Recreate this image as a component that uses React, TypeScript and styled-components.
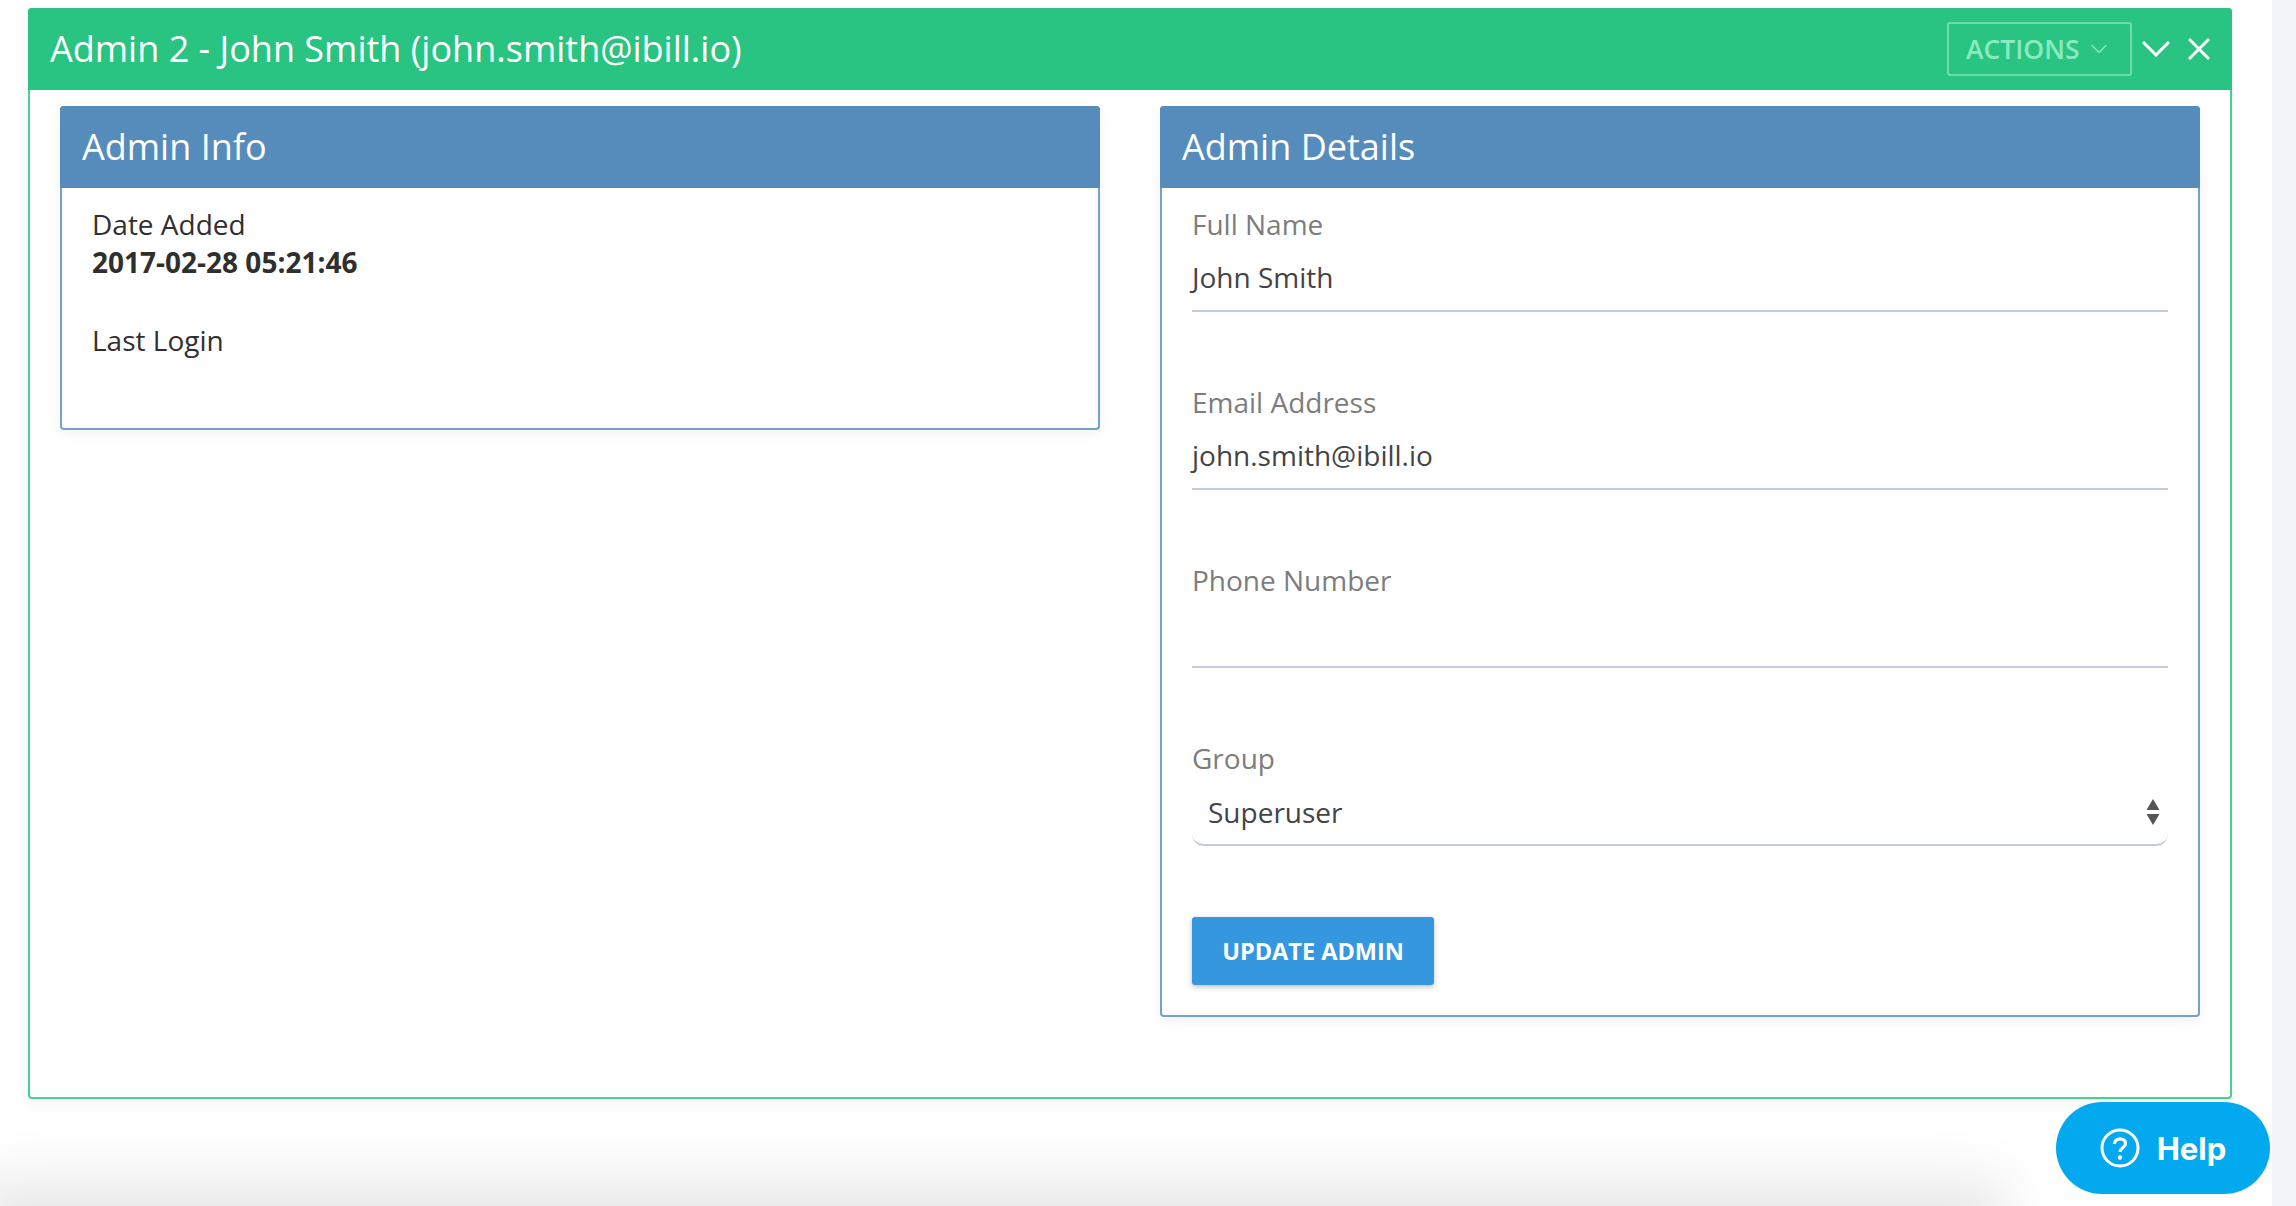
import styled, { createGlobalStyle } from "styled-components"
import { ChevronDown } from "lucide-react"

const GlobalStyle = createGlobalStyle`
    html, body {
        margin: 0;
        height: 100%;
        overflow: hidden;
        background: #fff;
    }
    body {
        font-family: "Open Sans", "Liberation Sans", sans-serif;
        color: #2f2f2f;
    }
`

export default function App() {
    return (
        <Page>
            <GlobalStyle />
            <Main>
                <Panel>
                    <PanelHeader>
                        <PanelTitle>Admin 2 - John Smith (john.smith@ibill.io)</PanelTitle>
                        <PanelTools>
                            <ActionsButton type="button">
                                ACTIONS
                                <ActionsCaret><ChevronDown size={28} strokeWidth={1.2} /></ActionsCaret>
                            </ActionsButton>
                            <svg width="28" height="16" viewBox="0 0 28 16" fill="none">
                                <path d="M1 1 L14 14 L27 1" stroke="#fff" strokeWidth="3" />
                            </svg>
                            <svg width="22" height="22" viewBox="0 0 22 22" fill="none">
                                <path d="M1 1 L21 21 M21 1 L1 21" stroke="#fff" strokeWidth="3" />
                            </svg>
                        </PanelTools>
                    </PanelHeader>
                    <PanelBody>
                        <Card>
                            <CardHeader>Admin Info</CardHeader>
                            <InfoBody>
                                <InfoLabel>Date Added</InfoLabel>
                                <InfoValue>2017-02-28 05:21:46</InfoValue>
                                <InfoLabel>Last Login</InfoLabel>
                            </InfoBody>
                        </Card>
                        <Card>
                            <CardHeader>Admin Details</CardHeader>
                            <FormBody>
                                <Field>
                                    <FieldLabel>Full Name</FieldLabel>
                                    <FieldValue>John Smith</FieldValue>
                                </Field>
                                <Field>
                                    <FieldLabel>Email Address</FieldLabel>
                                    <FieldValue>john.smith@ibill.io</FieldValue>
                                </Field>
                                <Field>
                                    <FieldLabel>Phone Number</FieldLabel>
                                    <FieldValue></FieldValue>
                                </Field>
                                <Field>
                                    <FieldLabel>Group</FieldLabel>
                                    <SelectValue>
                                        Superuser
                                        <svg width="14" height="26" viewBox="0 0 14 26">
                                            <path d="M7 0 L13.5 11 H0.5 Z M0.5 15 H13.5 L7 26 Z" fill="#555" />
                                        </svg>
                                    </SelectValue>
                                </Field>
                                <SubmitButton type="button">UPDATE ADMIN</SubmitButton>
                            </FormBody>
                        </Card>
                    </PanelBody>
                </Panel>
                <BottomFade />
            </Main>
            <Strip />
            <HelpButton type="button">
                <svg width="40" height="40" viewBox="0 0 40 40" fill="none">
                    <circle cx="20" cy="20" r="18" stroke="#fff" strokeWidth="3" />
                    <path d="M14.5 16c0-3.2 2.4-5.2 5.6-5.2 3.200 0 5.400 1.900 5.400 4.600 0 4.200-5.500 4.400-5.500 8.600" stroke="#fff" strokeWidth="3.200" />
                    <circle cx="20" cy="29.500" r="2.200" fill="#fff" />
                </svg>
                Help
            </HelpButton>
        </Page>
    )
}

const Page = styled.div`
    display: flex;
    width: 2296px;
    height: 1206px;
    overflow: hidden;
`

const Main = styled.main`
    position: relative;
    flex: 1;
    padding: 8px 40px 0 28px;
    overflow: hidden;
`

const Strip = styled.div`
    width: 24px;
    background: #f1f3f8;
`

const Panel = styled.section`
    position: relative;
    z-index: 1;
    height: 1091px;
    box-sizing: border-box;
    border: 2px solid #45d194;
    border-top: none;
    border-radius: 4px;
    background: #fff;
    box-shadow: 0 6px 16px rgba(0, 0, 0, 0.04);
`

const PanelHeader = styled.header`
    display: flex;
    align-items: center;
    justify-content: space-between;
    height: 82px;
    margin: 0 -2px;
    padding: 0 22px 0 22px;
    background: #29c481;
    border-radius: 4px 4px 0 0;
`

const PanelTitle = styled.h1`
    margin: 0 0 2px;
    font-size: 36px;
    font-weight: 400;
    color: #fff;
`

const PanelTools = styled.div`
    display: flex;
    align-items: center;
    gap: 18px;

    svg:first-of-type {
        margin-left: -8px;
    }
`

const ActionsButton = styled.button`
    display: flex;
    align-items: center;
    gap: 20px;
    box-sizing: border-box;
    width: 185px;
    height: 54px;
    padding: 0 0 0 17px;
    border: 2px solid #6fdcae;
    border-radius: 3px;
    background: transparent;
    color: #8aeac0;
    font-family: inherit;
    font-size: 26.500px;
    font-weight: 600;
`

const ActionsCaret = styled.span`
    display: flex;
    margin: 0 -7px;
`

const PanelBody = styled.div`
    display: flex;
    align-items: flex-start;
    justify-content: space-between;
    padding: 16px 30px 0;
`

const Card = styled.article`
    box-sizing: border-box;
    width: 1040px;
    border: 2px solid #75a2cc;
    border-top: none;
    border-radius: 4px;
    background: #fff;
    box-shadow: 0 4px 14px rgba(0, 0, 0, 0.05);
`

const CardHeader = styled.h2`
    display: flex;
    align-items: center;
    box-sizing: border-box;
    height: 82px;
    margin: 0 -2px;
    padding: 0 22px 2px;
    background: #568cbc;
    border-radius: 4px 4px 0 0;
    color: #fff;
    font-size: 36px;
    font-weight: 400;
`

const InfoBody = styled.div`
    display: flex;
    flex-direction: column;
    height: 240px;
    padding: 17px 30px 0;
    box-sizing: border-box;
`

const InfoLabel = styled.div`
    font-size: 28px;
    line-height: 38px;
    color: #2f2f2f;
`

const InfoValue = styled.div`
    margin-bottom: 40px;
    font-size: 28px;
    line-height: 38px;
    font-weight: 700;
    color: #2f2f2f;
`

const FormBody = styled.div`
    display: flex;
    flex-direction: column;
    padding: 17px 30px 30px;
`

const Field = styled.div`
    height: 178px;
`

const FieldLabel = styled.div`
    font-size: 28px;
    line-height: 38px;
    color: #7d7d7d;
`

const FieldValue = styled.div`
    box-sizing: border-box;
    height: 69px;
    padding-top: 15px;
    border-bottom: 2px solid #c0cbdc;
    font-size: 28px;
    line-height: 38px;
    color: #444;
`

const SelectValue = styled(FieldValue)`
    display: flex;
    align-items: center;
    justify-content: space-between;
    padding: 2px 8px 0 16px;
    border-radius: 0 0 12px 12px;
`

const SubmitButton = styled.button`
    align-self: flex-start;
    box-sizing: border-box;
    width: 242px;
    height: 68px;
    padding: 0;
    border: none;
    border-radius: 3px;
    background: #3597de;
    color: #fff;
    font-family: inherit;
    font-size: 23.500px;
    font-weight: 700;
    box-shadow: 0 2px 5px rgba(0, 0, 0, 0.25);
`

const BottomFade = styled.div`
    position: absolute;
    left: 0;
    bottom: -40px;
    width: 1980px;
    height: 40px;
    box-shadow: 0 0 60px 24px rgba(0, 0, 0, 0.1);
`

const HelpButton = styled.button`
    position: fixed;
    left: 2056px;
    top: 1102px;
    z-index: 2;
    display: flex;
    align-items: center;
    justify-content: center;
    gap: 17px;
    width: 214px;
    height: 92px;
    padding: 0;
    border: none;
    border-radius: 46px;
    background: #02a9ef;
    color: #fff;
    font-family: Inter, "Liberation Sans", sans-serif;
    font-size: 31px;
    font-weight: 700;
`
